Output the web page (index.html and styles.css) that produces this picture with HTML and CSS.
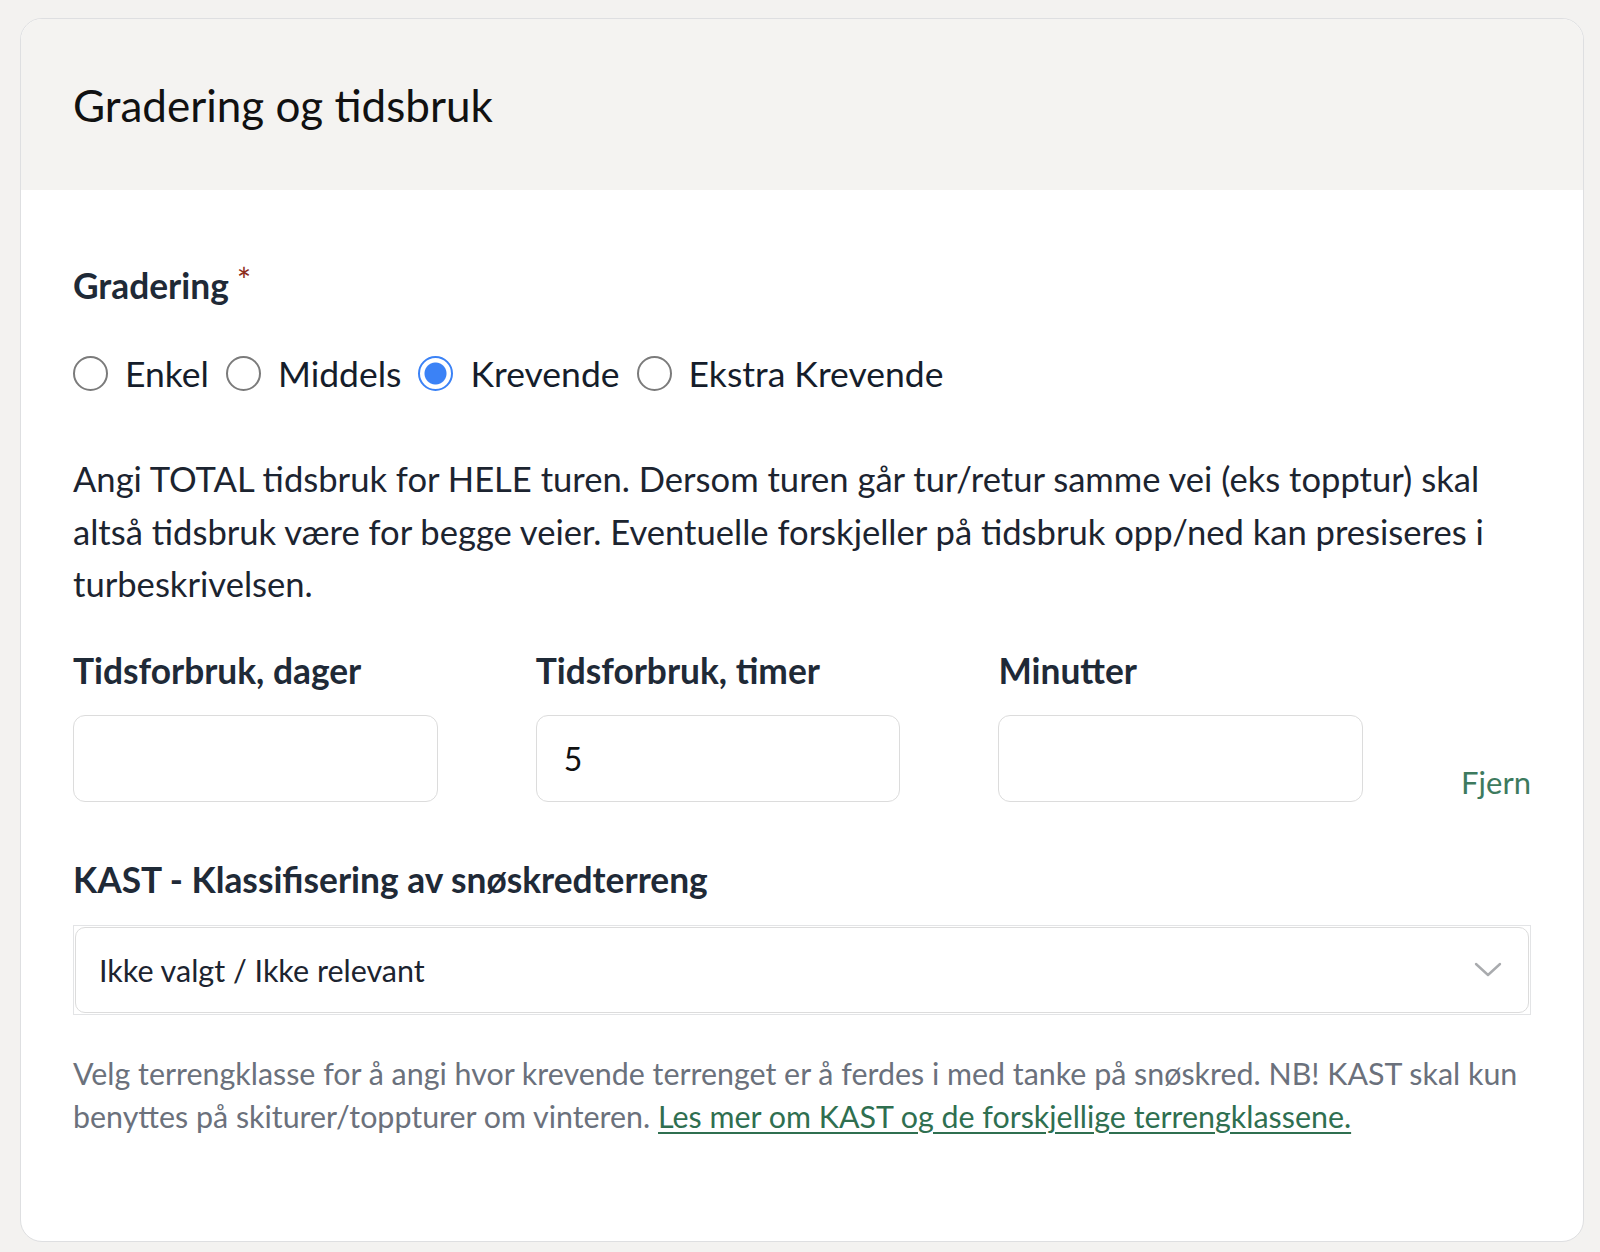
FILE: index.html
```html
<!DOCTYPE html>
<html lang="no">
<head>
<meta charset="utf-8">
<title>Gradering og tidsbruk</title>
<link rel="stylesheet" href="styles.css">
</head>
<body>
<section class="card">
  <header class="card-header">
    <h2 class="card-title">Gradering og tidsbruk</h2>
  </header>
  <div class="card-body">
    <div class="field-label">Gradering<span class="req">*</span></div>
    <div class="radios">
      <label class="radio"><input type="radio" name="grad"><span>Enkel</span></label>
      <label class="radio"><input type="radio" name="grad"><span>Middels</span></label>
      <label class="radio"><input type="radio" name="grad" checked><span>Krevende</span></label>
      <label class="radio"><input type="radio" name="grad"><span>Ekstra Krevende</span></label>
    </div>
    <p class="intro">Angi TOTAL tidsbruk for HELE turen. Dersom turen går tur/retur samme vei (eks topptur) skal altså tidsbruk være for begge veier. Eventuelle forskjeller på tidsbruk opp/ned kan presiseres i turbeskrivelsen.</p>
    <div class="time-row">
      <div class="time-col">
        <div class="field-label">Tidsforbruk, dager</div>
        <input class="text-input" type="text" value="">
      </div>
      <div class="time-col">
        <div class="field-label">Tidsforbruk, timer</div>
        <input class="text-input" type="text" value="5">
      </div>
      <div class="time-col">
        <div class="field-label">Minutter</div>
        <input class="text-input" type="text" value="">
      </div>
      <a class="remove" href="#">Fjern</a>
    </div>
    <div class="field-label kast-label">KAST - Klassifisering av snøskredterreng</div>
    <div class="select-wrap">
      <div class="select">
        <span>Ikke valgt / Ikke relevant</span>
        <svg class="chev" width="28" height="16" viewBox="0 0 28 16"><path d="M2 2 L14 13 L26 2" fill="none" stroke="#a9abae" stroke-width="2.4" stroke-linecap="round" stroke-linejoin="round"/></svg>
      </div>
    </div>
    <p class="help">Velg terrengklasse for å angi hvor krevende terrenget er å ferdes i med tanke på snøskred. NB! KAST skal kun benyttes på skiturer/toppturer om vinteren. <a href="#" class="help-link">Les mer om KAST og de forskjellige terrengklassene.</a></p>
  </div>
</section>
</body>
</html>
```
FILE: styles.css
```css
* { box-sizing: border-box; }
html, body { margin: 0; padding: 0; }
body {
  background: #f3f2f0;
  font-family: Lato, "Noto Sans", sans-serif;
  color: #1c2430;
  padding: 18px 16px 10px 20px;
}
.card {
  background: #ffffff;
  border: 1px solid #dedfe1;
  border-radius: 22px;
  overflow: hidden;
  height: 1224px;
}
.card-header {
  background: #f4f3f1;
  height: 171px;
  display: flex;
  align-items: center;
  padding: 0 52px;
}
.card-title {
  margin: 0;
  font-size: 44px;
  font-weight: 400;
  color: #111111;
  line-height: 1.2;
  padding-top: 2px;
}
.card-body {
  padding: 77px 52px 0 52px;
}
.field-label {
  font-size: 35.3px;
  font-weight: 700;
  color: #1f2a37;
  line-height: 38px;
}
.req {
  color: #8c2b1c;
  font-size: 34px;
  font-weight: 400;
  margin-left: 8px;
  position: relative;
  top: -6px;
}
.radios {
  display: flex;
  gap: 17px;
  margin-top: 48px;
  height: 40px;
  align-items: center;
}
.radio {
  display: inline-flex;
  align-items: center;
  gap: 17px;
  font-size: 35.5px;
  color: #151d2b;
}
.radio input {
  appearance: none;
  -webkit-appearance: none;
  margin: 0;
  width: 35px;
  height: 35px;
  border: 2px solid #7b7b7b;
  border-radius: 50%;
  background: #fff;
}
.radio input:checked {
  border: 2px solid #3b82f6;
  background: radial-gradient(circle, #3b82f6 0 10.5px, #ffffff 11.5px);
}
.intro {
  margin: 60px 0 0 0;
  font-size: 34.6px;
  line-height: 52.5px;
  color: #1c2430;
}
.time-row {
  display: flex;
  justify-content: space-between;
  align-items: flex-end;
  margin-top: 41px;
}
.time-col {
  width: 364.5px;
}
.text-input {
  display: block;
  width: 100%;
  height: 87px;
  margin-top: 25px;
  border: 1.5px solid #dcdcdc;
  border-radius: 12px;
  padding: 0 27px;
  font-family: Lato, "Noto Sans", sans-serif;
  font-size: 32px;
  color: #111;
  background: #fff;
  outline: none;
}
.remove {
  color: #3d7a5e;
  font-size: 31px;
  text-decoration: none;
  line-height: 38px;
  margin-bottom: 1px;
}
.kast-label {
  margin-top: 59px;
}
.select-wrap {
  margin-top: 26px;
  border: 1.5px solid #e3e4e6;
  padding: 1px;
}
.select {
  height: 86px;
  border: 1.5px solid #dcdcdc;
  border-radius: 10px;
  display: flex;
  align-items: center;
  justify-content: space-between;
  padding: 0 26px 0 23px;
  font-size: 30.5px;
  color: #1c2430;
}
.chev { display: block; }
.help {
  margin: 37px 0 0 0;
  font-size: 30.4px;
  line-height: 43px;
  color: #6b717c;
}
.help-link {
  color: #2f6f50;
  text-decoration: underline;
  text-underline-offset: 4px;
  text-decoration-thickness: 1.5px;
}
```
